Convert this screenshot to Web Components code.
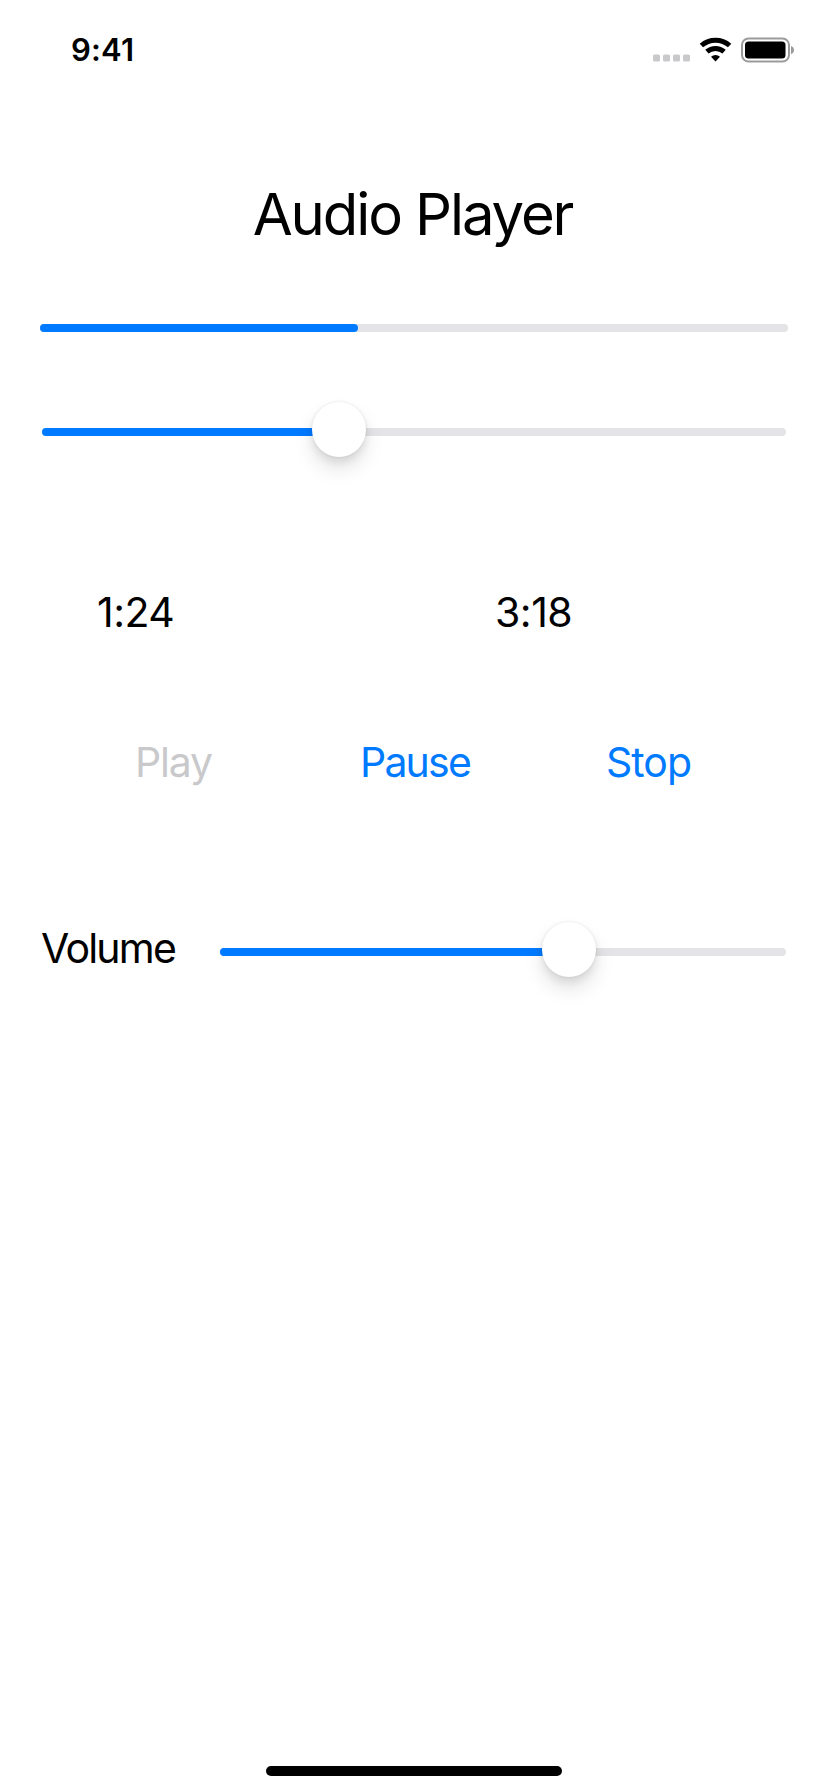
<!DOCTYPE html>
<html lang="en">
<head>
<meta charset="utf-8">
<title>Audio Player</title>
<style>
html,body{margin:0;background:#fff}
body{font-family:Inter,"Liberation Sans",sans-serif;color:#000}
</style>
</head>
<body>
<audio-player-screen></audio-player-screen>
<script>
const define = (name, html, setup) => customElements.define(name, class extends HTMLElement {
  constructor() {
    super();
    const t = document.createElement('template');
    t.innerHTML = html;
    this.attachShadow({mode: 'open'}).append(t.content.cloneNode(true));
  }
  connectedCallback() { if (setup) setup(this); }
});

define('status-bar', `<style>
:host{display:flex;height:99px;box-sizing:border-box;padding:0 33px 0 71px;align-items:center;justify-content:space-between}
.time{font-size:31px;font-weight:600;line-height:40px;letter-spacing:.2px}
svg{display:block}
</style>
<span class="time">9:41</span>
<svg width="142" height="26" viewBox="0 0 142 26">
<g fill="#c9c9cb"><rect y="17.5" width="7" height="7" rx="1.6"/><rect x="10" y="17.5" width="7" height="7" rx="1.6"/><rect x="20" y="17.5" width="7" height="7" rx="1.6"/><rect x="30" y="17.5" width="7" height="7" rx="1.6"/></g>
<g fill="none" stroke="#000" stroke-width="5"><path d="M48.4 8.5a21.3 21.3 0 0 1 28.2 0"/><path d="M53.9 14.7a13 13 0 0 1 17.2 0"/></g>
<path d="M58 19.8a6.8 6.8 0 0 1 9 0L62.5 24.5z"/>
<rect x="89" y="1.5" width="47" height="23" rx="6.5" fill="none" stroke="#9b9b9d" stroke-width="2"/>
<rect x="92" y="4.4" width="40.5" height="17.2" rx="3.5"/>
<path d="M138 9c2 .6 3 2.2 3 4.1s-1 3.5-3 4.1z" fill="#9b9b9d"/>
</svg>`);

define('text-label', `<style>
:host{display:block;font-size:41px;line-height:60px;white-space:nowrap;letter-spacing:-.5px}
:host([variant=title]){font-size:58px;line-height:108px;text-align:center;letter-spacing:-2.1px}
:host([variant=action]){color:#007aff}
:host([disabled]){color:#c9c9cb}
</style><slot></slot>`);

define('progress-track', `<style>
:host{display:block;height:8px;border-radius:4px;background:#e4e4e6}
.fill{height:8px;border-radius:4px;background:#007aff}
</style><div class="fill"></div>`, el => {
  el.shadowRoot.querySelector('.fill').style.width = el.getAttribute('value') + 'px';
});

define('slider-control', `<style>
:host{display:grid;position:relative;height:8px}
.knob{position:absolute;top:-26px;width:54px;height:55px;border-radius:50%;background:#fff;transform:translateX(-50%);box-shadow:0 0 3px rgba(0,0,0,.09),0 5px 8px rgba(0,0,0,.08),0 12px 20px rgba(0,0,0,.11)}
</style><progress-track></progress-track><div class="knob"></div>`, el => {
  const v = el.getAttribute('value'), track = el.shadowRoot.querySelector('progress-track');
  track.setAttribute('value', v);
  track.shadowRoot.querySelector('.fill').style.width = v + 'px';
  el.shadowRoot.querySelector('.knob').style.left = v + 'px';
});

define('home-indicator', `<style>
:host{display:block;width:296px;height:10px;border-radius:5px;background:#000}
</style>`);

define('audio-player-screen', `<style>
:host{display:flex;flex-direction:column;width:828px;height:1792px;background:#fff;overflow:hidden}
.title{margin-top:61px;padding-right:3px}
.progress{margin:56px 40px 0}
.seek{margin:96px 42px 0}
.times{display:grid;grid-template-columns:398px 1fr;margin-top:146px;padding-left:97px}
.actions{display:grid;grid-template-columns:225px 246px 1fr;margin-top:90px;padding-left:135px}
.play{letter-spacing:-1.2px}
.pause{letter-spacing:-1.8px}
.stop{letter-spacing:-1px}
.volume{display:grid;grid-template-columns:179px 566px;align-items:center;margin-top:126px;padding-left:41px}
.volume text-label{letter-spacing:-1.8px}
.volume slider-control{margin-top:8px}
home-indicator{margin:auto auto 16px}
</style>
<status-bar></status-bar>
<text-label class="title" variant="title">Audio Player</text-label>
<progress-track class="progress" value="318"></progress-track>
<slider-control class="seek" value="297"></slider-control>
<div class="times"><text-label>1:24</text-label><text-label>3:18</text-label></div>
<div class="actions"><text-label class="play" variant="action" disabled>Play</text-label><text-label class="pause" variant="action">Pause</text-label><text-label class="stop" variant="action">Stop</text-label></div>
<div class="volume"><text-label>Volume</text-label><slider-control value="349"></slider-control></div>
<home-indicator></home-indicator>`);
</script>
</body>
</html>
